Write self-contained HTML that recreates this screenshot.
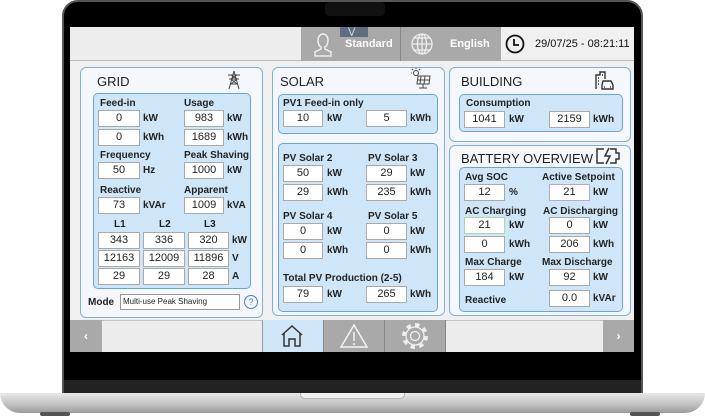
<!DOCTYPE html>
<html><head><meta charset="utf-8"><style>
*{box-sizing:border-box;margin:0;padding:0}
body{width:705px;height:420px;background:#fff;position:relative;overflow:hidden;font-family:"Liberation Sans",sans-serif}
.a{position:absolute}
.panel{position:absolute;background:#f4f8fc;border:1.5px solid #7fb0dc;border-radius:6px}
.box{position:absolute;background:#cfe6f8;border:1.5px solid #6fa3d3;border-radius:5px}
.t{position:absolute;font-size:13px;color:#222}
.l{position:absolute;font-size:10px;font-weight:bold;color:#222;white-space:nowrap}
.f{position:absolute;background:#fff;border:1px solid #a9a9a9;height:17px;font-size:11px;text-align:center;line-height:15px;color:#222}
.u{position:absolute;font-size:10px;color:#222;font-weight:bold}
</style></head><body>
<div class="a" style="left:62px;top:0;width:581px;height:395px;background:#000;border-radius:16px 16px 0 0;border:2px solid #555"></div>
<div class="a" style="left:325px;top:2px;width:60px;height:14px;background:#111;border-radius:4px"></div>
<div class="a" style="left:64px;top:380px;width:577px;height:14px;background:#222"></div>
<div class="a" style="left:0;top:393px;width:705px;height:20px;background:linear-gradient(#e8e8e8,#bfbfbf 60%,#9a9a9a);border-radius:0 0 30px 30px"></div>
<div class="a" style="left:300px;top:393px;width:105px;height:6px;background:#f2f2f2;border-radius:0 0 5px 5px;border:1px solid #bbb;border-top:none"></div>
<div class="a" style="left:40px;top:412px;width:30px;height:4px;background:#555;border-radius:2px"></div>
<div class="a" style="left:630px;top:412px;width:30px;height:4px;background:#555;border-radius:2px"></div>
<div class="a" style="left:70px;top:27px;width:564px;height:325px;background:#f0f0f0"></div>
<div class="a" style="left:70px;top:27px;width:231px;height:34px;background:#ededed;border-bottom:1px solid #bbb"></div>
<div class="a" style="left:301px;top:27px;width:100px;height:34px;background:#a9a9a9;border-right:1px solid #888"></div>
<div class="a" style="left:340px;top:27px;width:28px;height:10px;background:#5e6e7e"></div>
<div class="a" style="left:348px;top:26px;color:#dfe6ee;font-size:9px">&#8897;</div>
<svg class="a" style="left:309px;top:30px" width="28" height="28" viewBox="0 0 28 28" fill="none" stroke="#eee" stroke-width="1.5"><path d="M9 10a5 6 0 0 1 10 0c0 3-1 6-3 7v2l6 3v4H6v-4l6-3v-2c-2-1-3-4-3-7z"/></svg>
<div class="a" style="left:345px;top:38px;color:#fff;font-size:11px;font-weight:bold">Standard</div>
<div class="a" style="left:401px;top:27px;width:100px;height:34px;background:#a9a9a9"></div>
<svg class="a" style="left:410px;top:32px" width="24" height="24" viewBox="0 0 24 24" fill="none" stroke="#eee" stroke-width="1.3"><circle cx="12" cy="12" r="10"/><ellipse cx="12" cy="12" rx="4.5" ry="10"/><path d="M2 12h20M4 6h16M4 18h16M12 2v20"/></svg>
<div class="a" style="left:450px;top:38px;color:#fff;font-size:11px;font-weight:bold">English</div>
<div class="a" style="left:501px;top:27px;width:133px;height:34px;background:#f0f0f0;border-bottom:1px solid #bbb"></div>
<svg class="a" style="left:505px;top:34px" width="20" height="20" viewBox="0 0 20 20" fill="none" stroke="#111" stroke-width="1.8"><circle cx="10" cy="10" r="8.5"/><path d="M9 5v6h5"/></svg>
<div class="a" style="left:535px;top:38px;color:#111;font-size:11px">29/07/25 - 08:21:11</div>

<div class="panel" style="left:80px;top:67px;width:183px;height:251px"></div>
<div class="t" style="left:97px;top:74px">GRID</div>
<svg class="a" style="left:226px;top:70px" width="16" height="20" viewBox="0 0 16 20" fill="none" stroke="#444" stroke-width="1"><path d="M8 1L3 19M8 1l5 18M2 5h12M3 9h10M5 5l6 4M11 5L5 9M4 14h8M5 9l6 5M11 9l-6 5"/></svg>
<div class="box" style="left:93px;top:93px;width:158px;height:196px"></div>
<div class="l" style="left:100px;top:98px">Feed-in</div><div class="l" style="left:184px;top:98px">Usage</div>
<div class="f" style="left:98px;top:110px;width:42px">0</div><div class="u" style="left:143px;top:113px">kW</div>
<div class="f" style="left:184px;top:110px;width:40px">983</div><div class="u" style="left:227px;top:113px">kW</div>
<div class="f" style="left:98px;top:129px;width:42px">0</div><div class="u" style="left:143px;top:132px">kWh</div>
<div class="f" style="left:184px;top:129px;width:40px">1689</div><div class="u" style="left:227px;top:132px">kWh</div>
<div class="l" style="left:100px;top:150px">Frequency</div><div class="l" style="left:184px;top:150px">Peak Shaving</div>
<div class="f" style="left:98px;top:162px;width:42px">50</div><div class="u" style="left:143px;top:165px">Hz</div>
<div class="f" style="left:184px;top:162px;width:40px">1000</div><div class="u" style="left:227px;top:165px">kW</div>
<div class="l" style="left:100px;top:185px">Reactive</div><div class="l" style="left:184px;top:185px">Apparent</div>
<div class="f" style="left:98px;top:197px;width:42px">73</div><div class="u" style="left:143px;top:200px">kVAr</div>
<div class="f" style="left:184px;top:197px;width:40px">1009</div><div class="u" style="left:227px;top:200px">kVA</div>
<div class="l" style="left:114px;top:219px">L1</div><div class="l" style="left:159px;top:219px">L2</div><div class="l" style="left:204px;top:219px">L3</div>
<div class="f" style="left:98px;top:232px;width:42px">343</div><div class="f" style="left:143px;top:232px;width:42px">336</div><div class="f" style="left:188px;top:232px;width:41px">320</div><div class="u" style="left:232px;top:235px">kW</div>
<div class="f" style="left:98px;top:250px;width:42px">12163</div><div class="f" style="left:143px;top:250px;width:42px">12009</div><div class="f" style="left:188px;top:250px;width:41px">11896</div><div class="u" style="left:232px;top:253px">V</div>
<div class="f" style="left:98px;top:268px;width:42px">29</div><div class="f" style="left:143px;top:268px;width:42px">29</div><div class="f" style="left:188px;top:268px;width:41px">28</div><div class="u" style="left:232px;top:271px">A</div>
<div class="l" style="left:88px;top:297px">Mode</div>
<div class="a" style="left:120px;top:294px;width:120px;height:16px;background:#fff;border:1px solid #999;font-size:8px;line-height:14px;padding-left:2px;color:#222">Multi-use Peak Shaving</div>
<div class="a" style="left:244px;top:295px;width:14px;height:14px;border:1px solid #4a7fc0;border-radius:50%;font-size:9px;color:#4a7fc0;text-align:center;line-height:12px">?</div>

<div class="panel" style="left:272px;top:67px;width:173px;height:249px"></div>
<div class="t" style="left:280px;top:74px">SOLAR</div>
<svg class="a" style="left:410px;top:68px" width="22" height="22" viewBox="0 0 22 22" fill="none" stroke="#444" stroke-width="1"><circle cx="6" cy="5" r="2.5"/><path d="M6 0v1M1 5h1M2 1l1 1M10 1l-1 1"/><path d="M8 8h12l-1 8H7z M11 8l-1 8M15 8l-1 8M7.5 12h12M13 16v4M9 20h8"/></svg>
<div class="box" style="left:278px;top:94px;width:160px;height:40px"></div>
<div class="l" style="left:283px;top:98px">PV1 Feed-in only</div>
<div class="f" style="left:283px;top:110px;width:40px">10</div><div class="u" style="left:327px;top:113px">kW</div>
<div class="f" style="left:366px;top:110px;width:41px">5</div><div class="u" style="left:410px;top:113px">kWh</div>
<div class="box" style="left:278px;top:143px;width:160px;height:169px"></div>
<div class="l" style="left:283px;top:153px">PV Solar 2</div><div class="l" style="left:368px;top:153px">PV Solar 3</div>
<div class="f" style="left:283px;top:165px;width:40px">50</div><div class="u" style="left:327px;top:168px">kW</div>
<div class="f" style="left:366px;top:165px;width:41px">29</div><div class="u" style="left:410px;top:168px">kW</div>
<div class="f" style="left:283px;top:184px;width:40px">29</div><div class="u" style="left:327px;top:187px">kWh</div>
<div class="f" style="left:366px;top:184px;width:41px">235</div><div class="u" style="left:410px;top:187px">kWh</div>
<div class="l" style="left:283px;top:211px">PV Solar 4</div><div class="l" style="left:368px;top:211px">PV Solar 5</div>
<div class="f" style="left:283px;top:223px;width:40px">0</div><div class="u" style="left:327px;top:226px">kW</div>
<div class="f" style="left:366px;top:223px;width:41px">0</div><div class="u" style="left:410px;top:226px">kW</div>
<div class="f" style="left:283px;top:242px;width:40px">0</div><div class="u" style="left:327px;top:245px">kWh</div>
<div class="f" style="left:366px;top:242px;width:41px">0</div><div class="u" style="left:410px;top:245px">kWh</div>
<div class="l" style="left:283px;top:273px">Total PV Production (2-5)</div>
<div class="f" style="left:283px;top:286px;width:40px">79</div><div class="u" style="left:327px;top:289px">kW</div>
<div class="f" style="left:366px;top:286px;width:41px">265</div><div class="u" style="left:410px;top:289px">kWh</div>

<div class="panel" style="left:449px;top:67px;width:182px;height:75px"></div>
<div class="t" style="left:461px;top:74px">BUILDING</div>
<svg class="a" style="left:594px;top:70px" width="20" height="20" viewBox="0 0 20 20" fill="none" stroke="#333" stroke-width="1.4"><path d="M2 19V5h4V2h5v7M4 8h1M4 11h1M4 14h1M8 5h1"/><path d="M9 11h8l2 4v4H8v-4z M10 17h1M16 17h1"/></svg>
<div class="box" style="left:459px;top:94px;width:164px;height:38px"></div>
<div class="l" style="left:466px;top:98px">Consumption</div>
<div class="f" style="left:464px;top:111px;width:41px">1041</div><div class="u" style="left:509px;top:114px">kW</div>
<div class="f" style="left:549px;top:111px;width:41px">2159</div><div class="u" style="left:593px;top:114px">kWh</div>

<div class="panel" style="left:449px;top:145px;width:182px;height:171px"></div>
<div class="t" style="left:461px;top:151px">BATTERY OVERVIEW</div>
<svg class="a" style="left:595px;top:147px" width="26" height="18" viewBox="0 0 26 18" fill="none" stroke="#333" stroke-width="1.5"><path d="M9 2H2v14h7M15 2h6v4h3v6h-3v4h-6"/><path d="M14 1l-4 8h5l-4 8"/></svg>
<div class="box" style="left:459px;top:167px;width:164px;height:145px"></div>
<div class="l" style="left:465px;top:172px">Avg SOC</div><div class="l" style="left:542px;top:172px">Active Setpoint</div>
<div class="f" style="left:464px;top:184px;width:41px">12</div><div class="u" style="left:509px;top:187px">%</div>
<div class="f" style="left:549px;top:184px;width:41px;border-color:#b9a5d6">21</div><div class="u" style="left:593px;top:187px">kW</div>
<div class="l" style="left:465px;top:206px">AC Charging</div><div class="l" style="left:543px;top:206px">AC Discharging</div>
<div class="f" style="left:464px;top:217px;width:41px;border-color:#a8d8a8">21</div><div class="u" style="left:509px;top:220px">kW</div>
<div class="f" style="left:549px;top:217px;width:41px">0</div><div class="u" style="left:593px;top:220px">kW</div>
<div class="f" style="left:464px;top:236px;width:41px">0</div><div class="u" style="left:509px;top:239px">kWh</div>
<div class="f" style="left:549px;top:236px;width:41px">206</div><div class="u" style="left:593px;top:239px">kWh</div>
<div class="l" style="left:465px;top:257px">Max Charge</div><div class="l" style="left:542px;top:257px">Max Discharge</div>
<div class="f" style="left:464px;top:269px;width:41px">184</div><div class="u" style="left:509px;top:272px">kW</div>
<div class="f" style="left:549px;top:269px;width:41px">92</div><div class="u" style="left:593px;top:272px">kW</div>
<div class="l" style="left:465px;top:295px">Reactive</div>
<div class="f" style="left:549px;top:290px;width:41px">0.0</div><div class="u" style="left:593px;top:293px">kVAr</div>

<div class="a" style="left:70px;top:320px;width:564px;height:32px;background:#ececec;border-top:1px solid #c4c4c4"></div>
<div class="a" style="left:70px;top:320px;width:32px;height:32px;background:#a9a9a9;color:#fff;font-size:12px;font-weight:bold;text-align:center;line-height:32px">&#8249;</div>
<div class="a" style="left:603px;top:320px;width:31px;height:32px;background:#a9a9a9;color:#fff;font-size:12px;font-weight:bold;text-align:center;line-height:32px">&#8250;</div>
<div class="a" style="left:262px;top:320px;width:61px;height:32px;background:#cfe6f8;border-left:1px solid #999"></div>
<svg class="a" style="left:278px;top:323px" width="28" height="26" viewBox="0 0 28 26" fill="none" stroke="#333" stroke-width="1.5"><path d="M4 12L14 3l10 9M6 10v13h5v-7h6v7h5V10"/></svg>
<div class="a" style="left:323px;top:320px;width:61px;height:32px;background:#a9a9a9;border-left:1px solid #888"></div>
<svg class="a" style="left:339px;top:323px" width="30" height="26" viewBox="0 0 30 26" fill="none" stroke="#f4f4f4" stroke-width="1.5"><path d="M15 2L2 24h26z M15 9v9M15 20v2"/></svg>
<div class="a" style="left:384px;top:320px;width:62px;height:32px;background:#a9a9a9;border-left:1px solid #888;border-right:1px solid #888"></div>
<svg class="a" style="left:401px;top:322px" width="28" height="28" viewBox="0 0 28 28" fill="none" stroke="#eee" stroke-width="1.3"><circle cx="14" cy="14" r="11" stroke-width="4" stroke-dasharray="4.3 4.3"/><circle cx="14" cy="14" r="9"/><circle cx="14" cy="14" r="4.5"/></svg>
</body></html>
